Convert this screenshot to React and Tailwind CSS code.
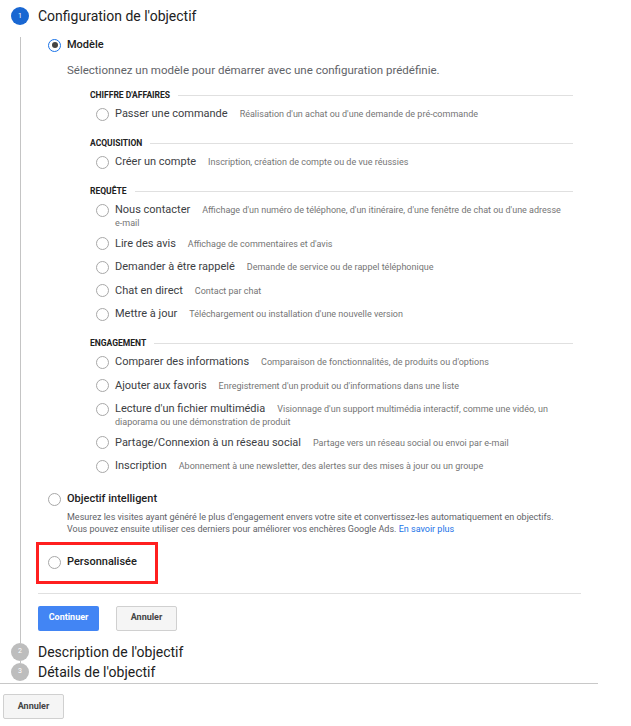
const Radio = ({ checked }) => (
  <span
    className={
      "flex h-[13px] w-[13px] shrink-0 items-center justify-center rounded-full border " +
      (checked ? "border-[#1a73e8] border-[1.5px]" : "border-[#a8a8a8]")
    }
  >
    {checked && <span className="h-[6px] w-[6px] rounded-full bg-[#444]" />}
  </span>
);

const Category = ({ title, first }) => (
  <div className={"ml-[42px] mr-[8px] flex h-[12px] items-center " + (first ? "mt-[12px]" : "mt-[15px]")}>
    <span className="text-[8.5px] font-bold uppercase leading-[12px] text-[#212121]">{title}</span>
    <span className="ml-[8px] h-px flex-1 bg-[#e0e0e0]" />
  </div>
);

const Item = ({ label, desc, more, first }) => (
  <div className={"flex items-start pl-[48px] " + (first ? "mt-[5px]" : "mt-[7.5px]")}>
    <span className="mt-[1.5px]">
      <Radio />
    </span>
    <div className="ml-[6px]">
      <div className="flex h-[16px] items-center whitespace-nowrap">
        <span className="text-[11px] leading-[16px] text-[#3c4043]">{label}</span>
        <span className="ml-[12px] text-[9px] leading-[16px] text-[#757575]">{desc}</span>
      </div>
      {more && <div className="h-[10px] text-[9px] leading-[10px] text-[#757575]">{more}</div>}
    </div>
  </div>
);

const StepCircle = ({ n, active }) => (
  <span
    className={
      "flex h-[18px] w-[18px] shrink-0 items-center justify-center rounded-full text-[7px] text-white " +
      (active ? "bg-[#1967d2]" : "bg-[#bdbdbd]")
    }
  >
    {n}
  </span>
);

const Btn = ({ children, primary }) => (
  <button
    className={
      "h-[25px] w-[61px] rounded-[2px] text-[9px] font-bold " +
      (primary ? "bg-[#4285f4] text-white" : "border border-[#d0d0d0] bg-[#f5f5f5] text-[#444]")
    }
  >
    {children}
  </button>
);

export default function App() {
  return (
    <div className="relative h-[726px] w-[631px] bg-white font-['Roboto',sans-serif] text-[#212121]">
      {/* step 1 */}
      <div className="flex items-center pt-[7px] pl-[11px]">
        <StepCircle n="1" active />
        <span className="ml-[9px] text-[14px] leading-[18px] text-[#212121]">Configuration de l'objectif</span>
      </div>

      <div className="ml-[20px] w-[561px] border-l border-[#c4c4c4] pb-[12px] pl-[27px]">
        <div className="mt-[12px] flex h-[16px] items-center">
          <Radio checked />
          <span className="ml-[6px] text-[11px] font-medium text-[#212121]">Modèle</span>
        </div>
        <div className="mt-[10px] pl-[19px] text-[11.5px] leading-[14px] text-[#5f6368]">
          Sélectionnez un modèle pour démarrer avec une configuration prédéfinie.
        </div>

        <Category title="Chiffre d'affaires" first />
        <Item first label="Passer une commande" desc="Réalisation d'un achat ou d'une demande de pré-commande" />

        <Category title="Acquisition" />
        <Item first label="Créer un compte" desc="Inscription, création de compte ou de vue réussies" />

        <Category title="Requête" />
        <Item
          first
          label="Nous contacter"
          desc="Affichage d'un numéro de téléphone, d'un itinéraire, d'une fenêtre de chat ou d'une adresse"
          more="e-mail"
        />
        <Item label="Lire des avis" desc="Affichage de commentaires et d'avis" />
        <Item label="Demander à être rappelé" desc="Demande de service ou de rappel téléphonique" />
        <Item label="Chat en direct" desc="Contact par chat" />
        <Item label="Mettre à jour" desc="Téléchargement ou installation d'une nouvelle version" />

        <Category title="Engagement" />
        <Item first label="Comparer des informations" desc="Comparaison de fonctionnalités, de produits ou d'options" />
        <Item label="Ajouter aux favoris" desc="Enregistrement d'un produit ou d'informations dans une liste" />
        <Item
          label="Lecture d'un fichier multimédia"
          desc="Visionnage d'un support multimédia interactif, comme une vidéo, un"
          more="diaporama ou une démonstration de produit"
        />
        <Item label="Partage/Connexion à un réseau social" desc="Partage vers un réseau social ou envoi par e-mail" />
        <Item label="Inscription" desc="Abonnement à une newsletter, des alertes sur des mises à jour ou un groupe" />

        {/* objectif intelligent */}
        <div className="mt-[17.5px] flex h-[16px] items-center">
          <Radio />
          <span className="ml-[6px] text-[11px] font-medium text-[#212121]">Objectif intelligent</span>
        </div>
        <div className="mt-[3px] pl-[19px] text-[9px] leading-[12.5px] text-[#5f6368]">
          Mesurez les visites ayant généré le plus d'engagement envers votre site et convertissez-les automatiquement en objectifs.
          <br />
          Vous pouvez ensuite utiliser ces derniers pour améliorer vos enchères Google Ads.{" "}
          <span className="text-[#1a73e8]">En savoir plus</span>
        </div>

        {/* personnalisée, highlighted */}
        <div className="relative mt-[19px] flex h-[16px] items-center">
          <Radio />
          <span className="ml-[6px] text-[11px] font-medium text-[#212121]">Personnalisée</span>
          <span className="pointer-events-none absolute -left-[12px] -top-[13px] h-[42px] w-[122px] border-[3px] border-[#ff1f1f]" />
        </div>

        <div className="-ml-[10px] mt-[22px] h-px w-[543px] bg-[#e0e0e0]" />

        <div className="-ml-[10px] mt-[12px] flex gap-[17px]">
          <Btn primary>Continuer</Btn>
          <Btn>Annuler</Btn>
        </div>
      </div>

      {/* steps 2 & 3 */}
      <div className="flex items-center pl-[11px]">
        <StepCircle n="2" />
        <span className="ml-[9px] text-[14px] leading-[18px] text-[#212121]">Description de l'objectif</span>
      </div>
      <div className="ml-[20px] h-[2px] w-px bg-[#c4c4c4]" />
      <div className="flex items-center pl-[11px]">
        <StepCircle n="3" />
        <span className="ml-[9px] text-[14px] leading-[18px] text-[#212121]">Détails de l'objectif</span>
      </div>

      <div className="mt-[2px] h-px w-[598px] bg-[#c8c8c8]" />
      <div className="mt-[8px] pl-[3px]">
        <Btn>Annuler</Btn>
      </div>
    </div>
  );
}
